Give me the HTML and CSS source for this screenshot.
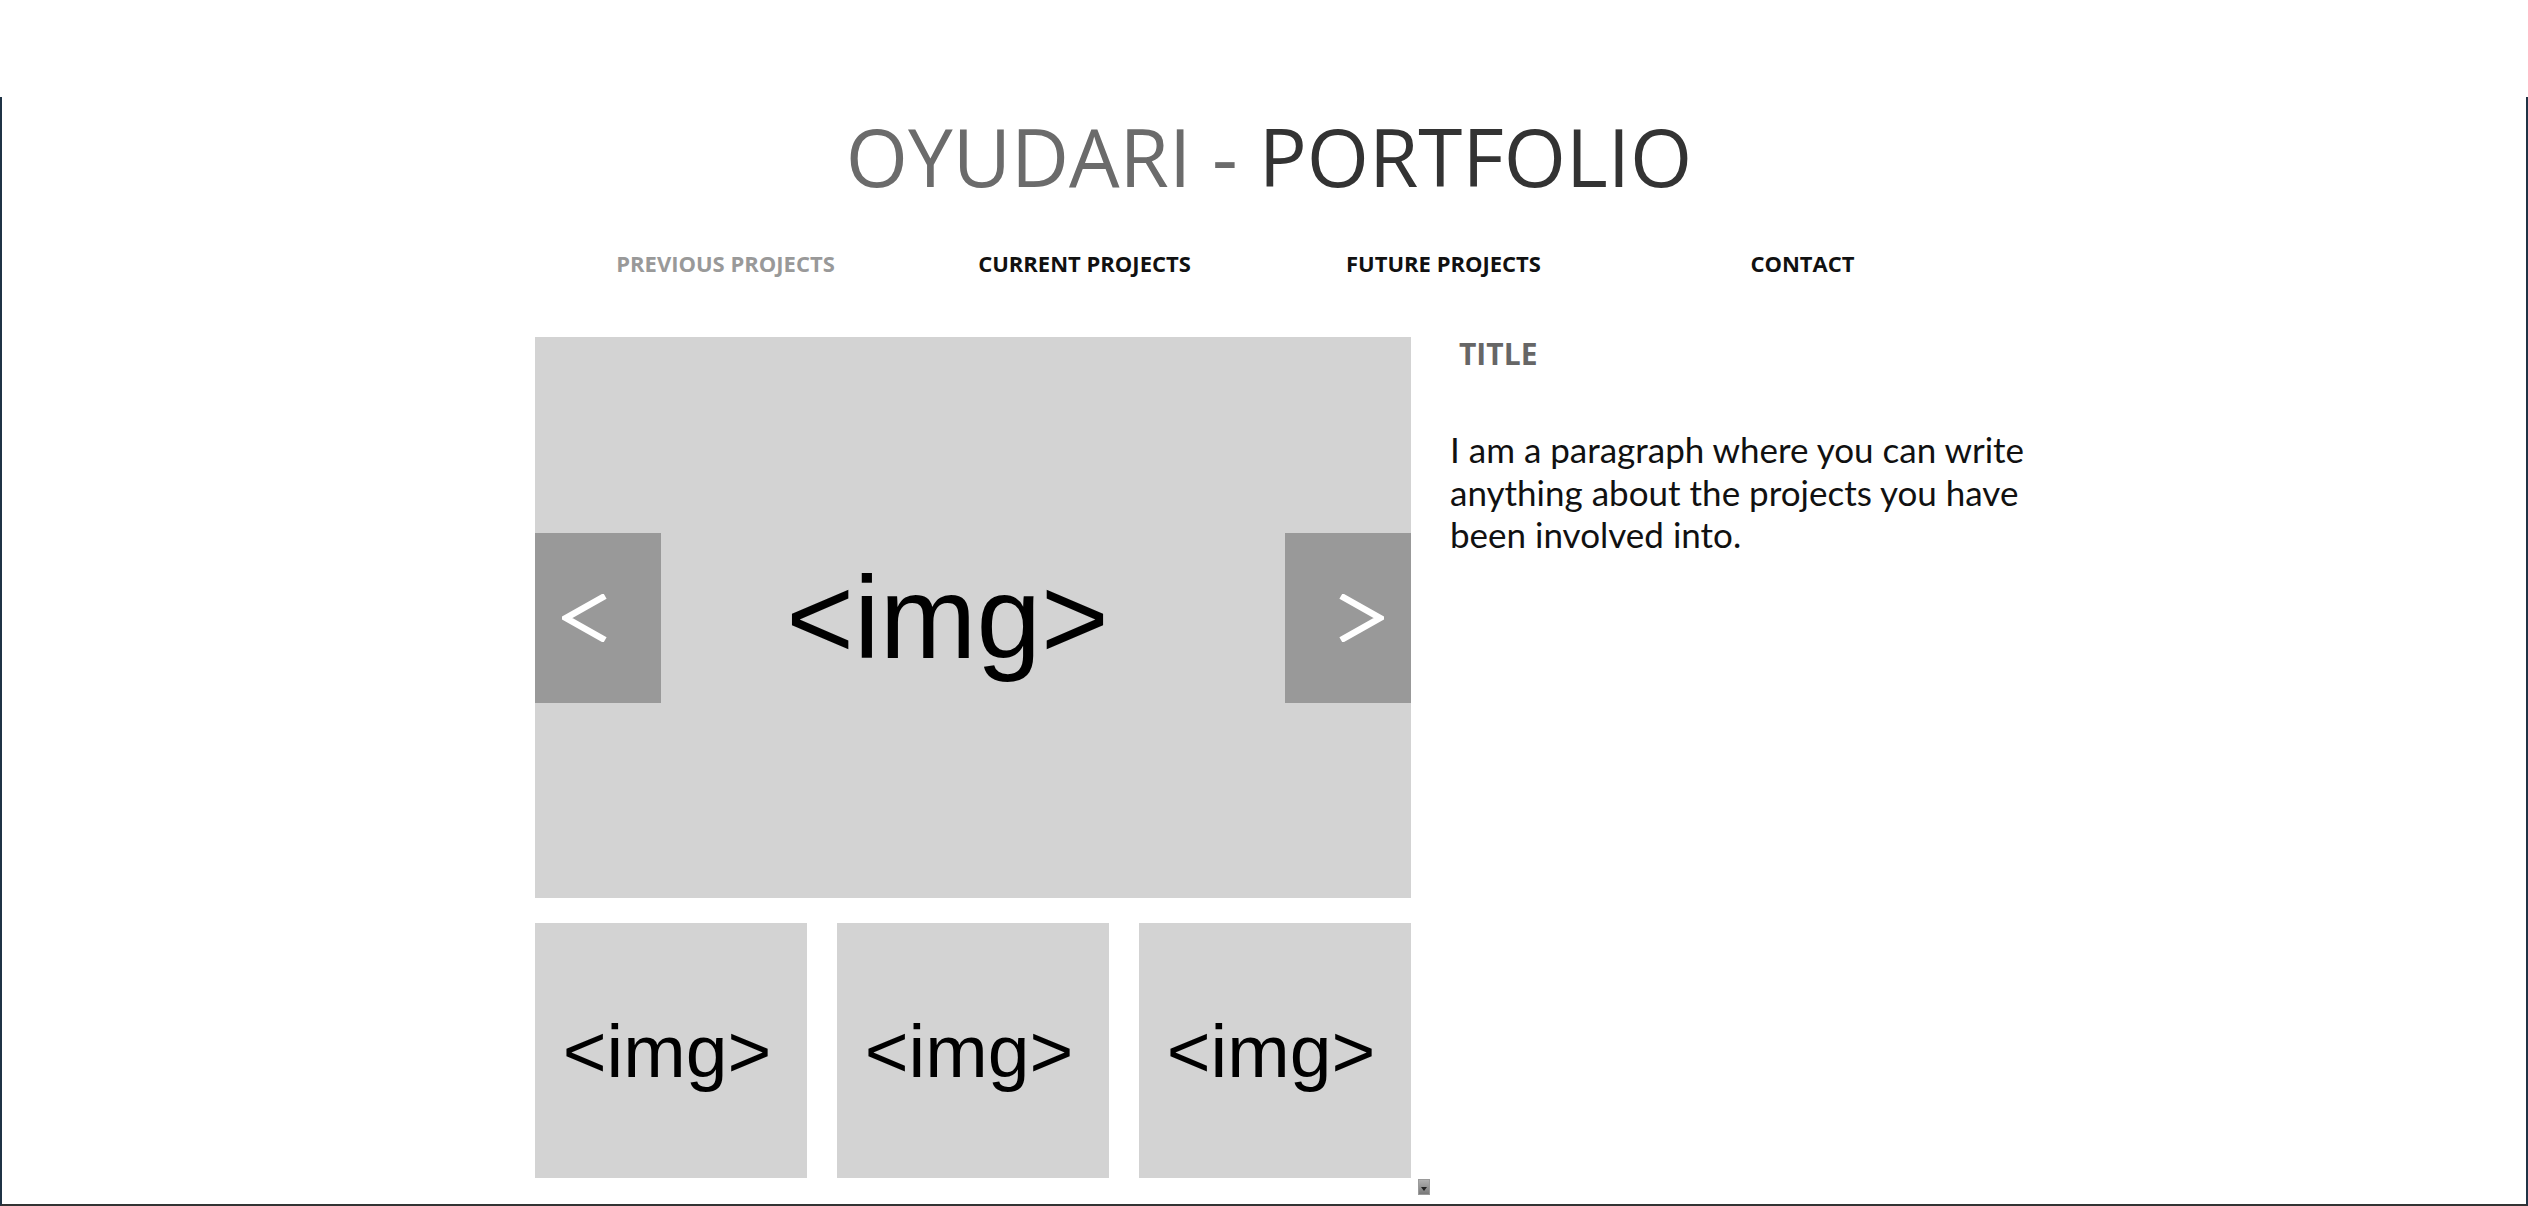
FILE: index.html
```html
<!DOCTYPE html>
<html lang="en">
<head>
<meta charset="utf-8">
<title>Oyudari - Portfolio</title>
<link rel="stylesheet" href="styles.css">
</head>
<body>
<div class="frame">
  <div class="page">
    <h1 class="site-title"><span class="t-light">OYUDARI - </span><span class="t-dark">PORTFOLIO</span></h1>
    <nav class="nav">
      <a class="nav-item is-active" href="#">PREVIOUS PROJECTS</a>
      <a class="nav-item" href="#">CURRENT PROJECTS</a>
      <a class="nav-item" href="#">FUTURE PROJECTS</a>
      <a class="nav-item" href="#">CONTACT</a>
    </nav>
    <main class="content">
      <section class="gallery">
        <div class="hero">
          <div class="arrow arrow-prev">
            <svg class="chev" width="46" height="48" viewBox="0 0 46 48"><polyline points="43,2 4,24 43,46" fill="none" stroke="#fff" stroke-width="6.5" stroke-linejoin="miter"/></svg>
          </div>
          <div class="hero-label">&lt;img&gt;</div>
          <div class="arrow arrow-next">
            <svg class="chev" width="46" height="48" viewBox="0 0 46 48"><polyline points="3,2 42,24 3,46" fill="none" stroke="#fff" stroke-width="6.5" stroke-linejoin="miter"/></svg>
          </div>
        </div>
        <div class="thumbs">
          <div class="thumb">&lt;img&gt;</div>
          <div class="thumb">&lt;img&gt;</div>
          <div class="thumb">&lt;img&gt;</div>
          <span class="handle"></span>
        </div>
      </section>
      <section class="info">
        <h2 class="info-title">TITLE</h2>
        <p class="info-text">I am a paragraph where you can write anything about the projects you have been involved into.</p>
      </section>
    </main>
  </div>
</div>
</body>
</html>
```

FILE: styles.css
```css
* { box-sizing: border-box; }

html, body {
  margin: 0;
  padding: 0;
  background: #ffffff;
}

body {
  font-family: "Open Sans", "Noto Sans", sans-serif;
  width: 2528px;
  height: 1206px;
  overflow: hidden;
}

.frame {
  margin-top: 97px;
  height: 1109px;
  border-left: 2px solid #1f3345;
  border-right: 2px solid #1f3345;
  border-bottom: 2px solid #333333;
}

.page {
  width: 1458px;
  margin: 0 auto;
}

.site-title {
  margin: 0;
  padding-top: 11px;
  padding-left: 10px;
  font-size: 80px;
  font-weight: 400;
  line-height: 96px;
  text-align: center;
  white-space: nowrap;
}

.t-light { color: #6b6b6b; }
.t-dark { color: #333333; }

.nav {
  width: 1436px;
  margin: 44px auto 0;
  display: grid;
  grid-template-columns: repeat(4, 1fr);
}

.nav-item {
  text-align: center;
  font-size: 22px;
  font-weight: 700;
  line-height: 30px;
  color: #111111;
  text-decoration: none;
}

.nav-item.is-active { color: #999999; }

.content {
  margin-top: 59px;
  display: flex;
  gap: 39px;
}

.gallery {
  width: 876px;
  flex: none;
}

.hero {
  height: 561px;
  background: #d3d3d3;
  display: grid;
  grid-template-columns: 126px 1fr 126px;
  align-items: center;
}

.arrow {
  height: 170px;
  background: #999999;
  display: flex;
  align-items: center;
}

.arrow-prev { justify-content: flex-start; padding-left: 27px; }
.arrow-next { justify-content: flex-end; padding-right: 27px; }

.chev { display: block; }

.hero-label {
  font-family: "Liberation Sans", Arial, sans-serif;
  font-size: 116px;
  line-height: normal;
  color: #000000;
  text-align: center;
  padding-right: 51px;
}

.thumbs {
  position: relative;
  margin-top: 25px;
  display: grid;
  grid-template-columns: repeat(3, 1fr);
  gap: 30px;
}

.thumb {
  height: 255px;
  background: #d3d3d3;
  display: flex;
  align-items: center;
  justify-content: center;
  padding-right: 8px;
  font-family: "Liberation Sans", Arial, sans-serif;
  font-size: 75px;
  color: #000000;
}

.handle {
  position: absolute;
  left: calc(100% + 7px);
  top: calc(100% + 1px);
  width: 12px;
  height: 16px;
  background: linear-gradient(#b0b0b0, #7a7a7a);
  border: 1px solid #9a9a9a;
}

.handle::after {
  content: "";
  position: absolute;
  left: 2px;
  bottom: 3px;
  width: 0;
  height: 0;
  border-left: 3px solid transparent;
  border-right: 3px solid transparent;
  border-top: 4px solid #222222;
}

.info {
  width: 600px;
  flex: none;
}

.info-title {
  margin: 0;
  padding-left: 9px;
  font-size: 30px;
  font-weight: 700;
  line-height: 34px;
  color: #666666;
}

.info-text {
  margin: 57px 0 0;
  font-family: "Lato", "Open Sans", sans-serif;
  font-size: 35px;
  line-height: 42.5px;
  color: #111111;
}
```
